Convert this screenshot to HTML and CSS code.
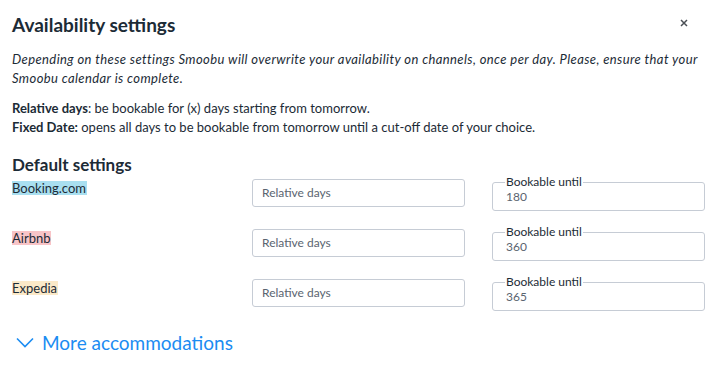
FILE: index.html
```html
<!DOCTYPE html>
<html lang="en">
<head>
    <meta charset="UTF-8">
    <title>Availability settings</title>
    <link rel="stylesheet" href="styles.css">
</head>
<body>
    <div class="modal">
        <div class="modal-header">
            <h2>Availability settings</h2>
            <button class="close-btn" aria-label="Close">
                <svg width="8" height="8" viewBox="0 0 8 8"><path d="M1 1 L7 7 M7 1 L1 7" stroke="currentColor" stroke-width="1.5"/></svg>
            </button>
        </div>

        <p class="intro">Depending on these settings Smoobu will overwrite your availability on channels, once per day. Please, ensure that your Smoobu calendar is complete.</p>

        <p class="legend-text">
            <b>Relative days</b>: be bookable for (x) days starting from tomorrow.<br>
            <b>Fixed Date:</b> opens all days to be bookable from tomorrow until a cut-off date of your choice.
        </p>

        <h3 class="section-title">Default settings</h3>

        <div class="channel-row">
            <div class="channel"><span class="tag booking">Booking.com</span></div>
            <div class="select-box">Relative days</div>
            <fieldset class="field">
                <legend>Bookable until</legend>
                <input type="text" value="180">
            </fieldset>
        </div>

        <div class="channel-row">
            <div class="channel"><span class="tag airbnb">Airbnb</span></div>
            <div class="select-box">Relative days</div>
            <fieldset class="field">
                <legend>Bookable until</legend>
                <input type="text" value="360">
            </fieldset>
        </div>

        <div class="channel-row">
            <div class="channel"><span class="tag expedia">Expedia</span></div>
            <div class="select-box">Relative days</div>
            <fieldset class="field">
                <legend>Bookable until</legend>
                <input type="text" value="365">
            </fieldset>
        </div>

        <a class="more-link" href="#">
            <svg width="18" height="11" viewBox="0 0 18 11"><path d="M1 1.5 L9 9.5 L17 1.5" fill="none" stroke="currentColor" stroke-width="1.6"/></svg>
            More accommodations
        </a>
    </div>
</body>
</html>
```

FILE: styles.css
```css
:root {
    --text-color: #1c2b36;
    --muted-color: #5a6470;
    --border-color: #c6ccd5;
    --link-color: #1b8cf2;
}

body {
    margin: 0;
    background: #ffffff;
    color: var(--text-color);
    font-family: Lato, "Liberation Sans", sans-serif;
}

.modal {
    padding: 14px 12px 12px;
}

.modal-header {
    display: flex;
    justify-content: space-between;
    align-items: center;
}

.modal-header h2 {
    margin: 0;
    font-size: 19px;
    font-weight: 700;
    line-height: 22px;
}

.close-btn {
    display: flex;
    background: none;
    border: none;
    padding: 0;
    margin: -4px 14px 0 0;
    color: #4a4f55;
    cursor: pointer;
}

.intro {
    margin: 14px -6px 0 0;
    font-size: 13px;
    font-style: italic;
    letter-spacing: 0.4px;
    line-height: 19px;
}

.legend-text {
    margin: 11px 0 0;
    font-size: 13px;
    line-height: 19px;
}

.section-title {
    margin: 18px 0 0;
    font-size: 17px;
    font-weight: 700;
    line-height: 20px;
}

.channel-row {
    display: grid;
    grid-template-columns: 240px 213px 240px;
    align-items: start;
    height: 50px;
}

.channel {
    font-size: 13px;
    line-height: 14px;
    padding-top: 6px;
}

.tag {
    display: inline-block;
    padding: 0 1px 0 0;
}

.tag.booking {
    background: #a9dff0;
}

.tag.airbnb {
    background: #f8c4c7;
}

.tag.expedia {
    background: #fbe9c8;
}

.select-box {
    margin-top: 4px;
    height: 26px;
    border: 1px solid var(--border-color);
    border-radius: 3px;
    padding: 0 9px;
    font-size: 12px;
    line-height: 26px;
    color: var(--muted-color);
}

.field {
    margin: 1px 0 0 27px;
    padding: 0 12px 5px;
    border: 1px solid var(--border-color);
    border-radius: 3px;
    min-width: 0;
}

.field legend {
    padding: 0 1px;
    font-size: 12px;
    line-height: 12px;
    color: var(--text-color);
}

.field input {
    display: block;
    width: 100%;
    border: none;
    padding: 0 1px;
    margin-top: 1px;
    font-family: Lato, "Liberation Sans", sans-serif;
    font-size: 12px;
    line-height: 16px;
    color: var(--muted-color);
    outline: none;
}

.more-link {
    display: inline-flex;
    align-items: center;
    gap: 8px;
    margin: 6px 0 0 4px;
    font-size: 19px;
    color: var(--link-color);
    text-decoration: none;
}
```
